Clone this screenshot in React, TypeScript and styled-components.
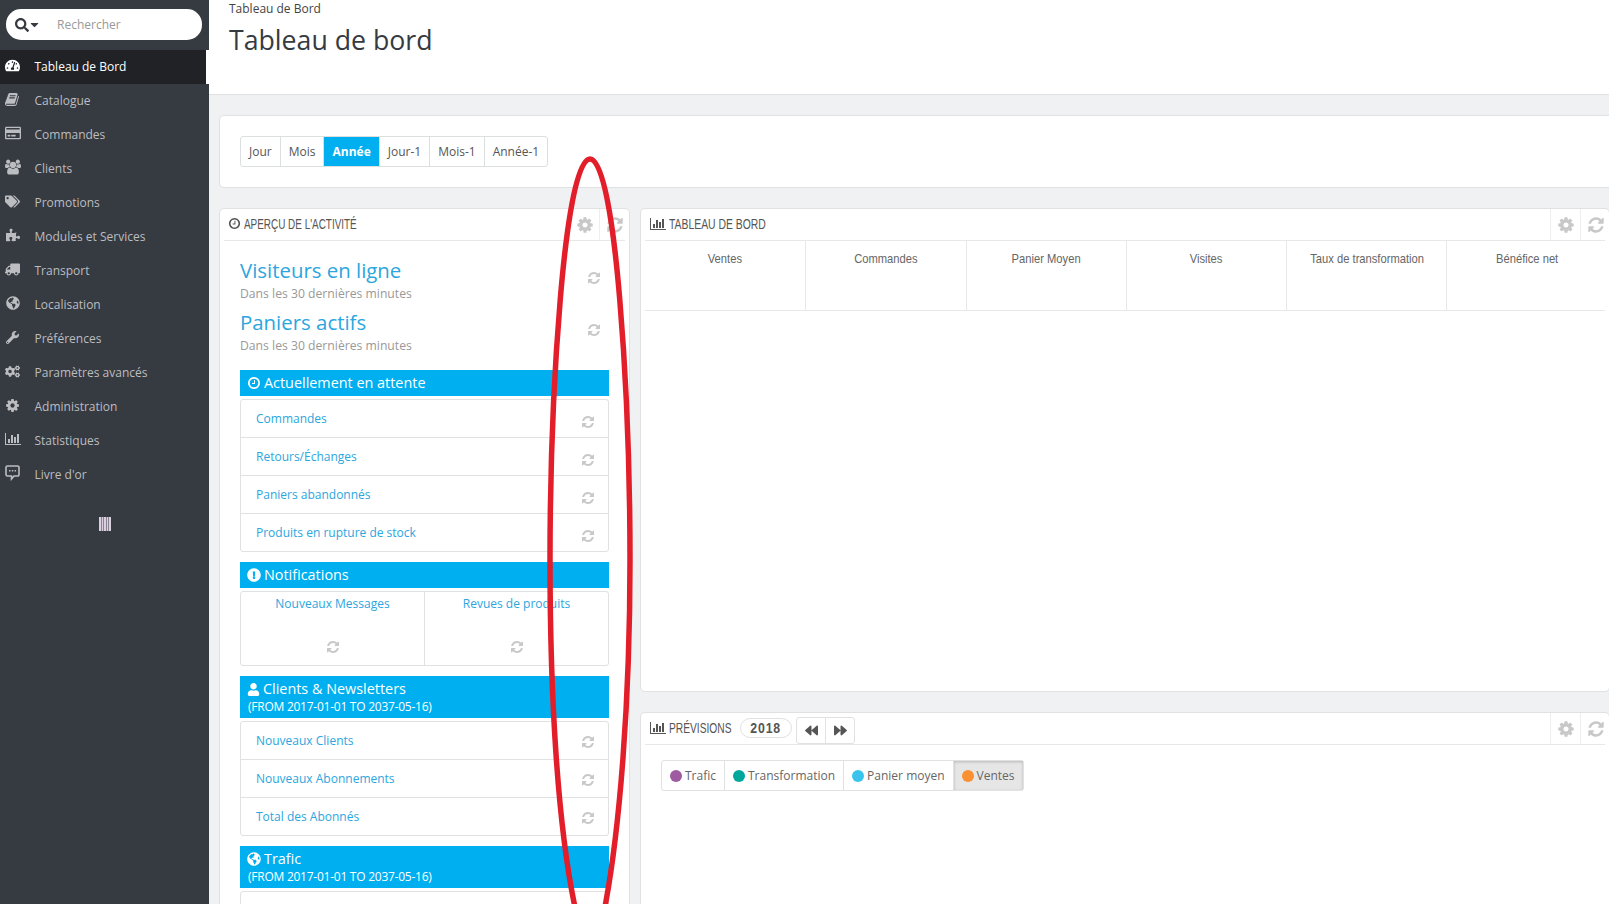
import React from 'react';
import styled, { createGlobalStyle } from 'styled-components';
import {
  FaBackward,
  FaCaretDown,
  FaExclamationCircle,
  FaForward,
  FaGlobeAmericas,
  FaPuzzlePiece,
  FaSearch,
  FaTachometerAlt,
  FaTags,
  FaTruck,
  FaUser,
  FaWrench,
  FaCogs,
  FaRegCreditCard,
} from 'react-icons/fa';

// font-awesome 4 shapes, the package only ships the redrawn v5 ones
const REFRESH =
  'M1639 1056q0 5-1 7-64 268-268 434.5t-478 166.5q-146 0-282.5-55t-243.5-157l-129 129q-19 19-45 19t-45-19-19-45v-448q0-26 19-45t45-19h448q26 0 45 19t19 45-19 45l-137 137q71 66 161 102t187 36q134 0 250-65t186-179q11-17 53-117 8-23 30-23h192q13 0 22.5 9.5t9.5 22.5zm25-800v448q0 26-19 45t-45 19h-448q-26 0-45-19t-19-45 19-45l138-138q-148-137-349-137-134 0-250 65t-186 179q-11 17-53 117-8 23-30 23h-199q-13 0-22.5-9.5t-9.5-22.5v-7q65-268 270-434.5t480-166.5q146 0 284 55.5t245 156.5l130-129q19-19 45-19t45 19 19 45z';
const COG =
  'M1152 896q0-106-75-181t-181-75-181 75-75 181 75 181 181 75 181-75 75-181zm512-109v222q0 12-8 23t-20 13l-185 28q-19 54-39 91 35 50 107 138 10 12 10 25t-9 23q-27 37-99 108t-94 71q-12 0-26-9l-138-108q-44 23-91 38-16 136-29 186-7 28-36 28h-222q-14 0-24.5-8.5t-11.5-21.5l-28-184q-49-16-90-37l-141 107q-10 9-25 9-14 0-25-11-126-114-165-168-7-10-7-23 0-12 8-23 15-21 51-66.5t54-70.5q-27-50-41-99l-183-27q-13-2-21-12.5t-8-23.5v-222q0-12 8-23t19-13l186-28q14-46 39-92-40-57-107-138-10-12-10-24 0-10 9-23 26-36 98.5-107.5t94.5-71.5q13 0 26 10l138 107q44-23 91-38 16-136 29-186 7-28 36-28h222q14 0 24.5 8.5t11.5 21.5l28 184q49 16 90 37l142-107q9-9 24-9 13 0 25 10 129 119 165 170 7 8 7 22 0 12-8 23-15 21-51 66.5t-54 70.5q26 50 41 98l183 28q13 2 21 12.5t8 23.5z';
const CHART =
  'M640 896v512h-256v-512h256zm384-512v1024h-256v-1024h256zm1024 1152v128h-2048v-1536h128v1408h1920zm-640-896v768h-256v-768h256zm384-384v1152h-256v-1152h256z';
const CLOCK =
  'M1024 544v448q0 14-9 23t-23 9h-320q-14 0-23-9t-9-23v-64q0-14 9-23t23-9h224v-352q0-14 9-23t23-9h64q14 0 23 9t9 23zm416 352q0-148-73-273t-198-198-273-73-273 73-198 198-73 273 73 273 198 198 273 73 273-73 198-198 73-273zm224 0q0 209-103 385.5t-279.5 279.5-385.5 103-385.5-103-279.5-279.5-103-385.5 103-385.5 279.5-279.5 385.5-103 385.5 103 279.5 279.5 103 385.5z';
const BOOK =
  'M1639 478q40 57 18 129l-275 906q-19 64-76.5 107.5t-122.5 43.5h-923q-77 0-148.5-53.5t-99.5-131.5q-24-67-2-127 0-4 3-27t4-37q1-8-3-21.5t-3-19.5q2-11 8-21t16.5-23.5 16.5-23.5q23-38 45-91.5t30-91.5q3-10 .5-30t-.5-28q3-11 17-28t17-23q21-36 42-92t25-90q1-9-2.5-32t.5-28q4-13 22-30.5t22-22.5q19-26 42.5-84.5t27.5-96.5q1-8-3-25.5t-2-26.5q2-8 9-18t18-23 17-21q8-12 16.5-30.5t15-35 16-36 19.5-32 26.5-23.5 36-11.5 47.5 5.5l-1 3q38-9 51-9h761q74 0 114 56t18 130l-274 906q-36 119-71.5 153.5t-128.5 34.5h-869q-27 0-38 15-11 16-1 43 24 70 144 70h923q29 0 56-15.5t35-41.5l300-987q7-22 5-57 38 15 59 43zm-1064 2q-4 13 2 22.5t20 9.5h608q13 0 25.5-9.5t16.5-22.5l21-64q4-13-2-22.5t-20-9.5h-608q-13 0-25.5 9.5t-16.5 22.5zm-83 256q-4 13 2 22.5t20 9.5h608q13 0 25.5-9.5t16.5-22.5l21-64q4-13-2-22.5t-20-9.5h-608q-13 0-25.5 9.5t-16.5 22.5z';
const USERS =
  'M593 896q-162 5-265 128h-134q-82 0-138-40.5t-56-118.5q0-353 124-353 6 0 43.5 21t97.5 42.5 119 21.5q67 0 133-23-5 37-5 66 0 139 81 256zm1071 637q0 120-73 189.5t-194 69.5h-874q-121 0-194-69.5t-73-189.5q0-53 3.5-103.5t14-109 26.5-108.5 43-97.5 62-81 85.5-53.5 111.5-20q10 0 43 21.5t73 48 107 48 135 21.5 135-21.5 107-48 73-48 43-21.5q61 0 111.5 20t85.5 53.5 62 81 43 97.5 26.5 108.5 14 109 3.5 103.5zm-1024-1277q0 106-75 181t-181 75-181-75-75-181 75-181 181-75 181 75 75 181zm704 384q0 159-112.5 271.5t-271.5 112.5-271.5-112.5-112.5-271.5 112.5-271.5 271.5-112.5 271.5 112.5 112.5 271.5zm576 225q0 78-56 118.5t-138 40.5h-134q-103-123-265-128 81-117 81-256 0-29-5-66 66 23 133 23 59 0 119-21.5t97.5-42.5 43.5-21q124 0 124 353zm-128-609q0 106-75 181t-181 75-181-75-75-181 75-181 181-75 181 75 75 181z';

function Glyph({ d, size, box = '0 0 1792 1792' }: { d: string; size: number; box?: string }) {
  return (
    <svg width={size} height={size} viewBox={box} fill="currentColor">
      <path d={d} />
    </svg>
  );
}

const ClockIcon = ({ size }: { size: number }) => <Glyph d={CLOCK} size={size} />;
const ChartIcon = ({ size }: { size: number }) => <Glyph d={CHART} size={size} box="0 0 2048 1792" />;

function CommentIcon() {
  return (
    <svg width="15" height="16" viewBox="0 0 15 16">
      <path
        d="M2.5 1h10A1.5 1.5 0 0 1 14 2.5v7a1.5 1.5 0 0 1-1.5 1.5H9l-2.5 3V11h-4A1.5 1.5 0 0 1 1 9.500v-7A1.500 1.500 0 0 1 2.500 1z"
        fill="none"
        stroke="currentColor"
        strokeWidth="1.6"
      />
      <path d="M4 5h1.500v1.500H4zM6.800 5h1.500v1.500H6.800zM9.600 5h1.500v1.500H9.600z" fill="currentColor" />
    </svg>
  );
}

const NAV: { label: string; icon: React.ReactNode; active?: boolean }[] = [
  { label: 'Tableau de Bord', icon: <FaTachometerAlt size={15} />, active: true },
  { label: 'Catalogue', icon: <Glyph d={BOOK} size={15} /> },
  { label: 'Commandes', icon: <FaRegCreditCard size={16} /> },
  { label: 'Clients', icon: <Glyph d={USERS} size={16} box="0 0 1920 1792" /> },
  { label: 'Promotions', icon: <FaTags size={15} /> },
  { label: 'Modules et Services', icon: <FaPuzzlePiece size={14} /> },
  { label: 'Transport', icon: <FaTruck size={15} /> },
  { label: 'Localisation', icon: <FaGlobeAmericas size={14} /> },
  { label: 'Préférences', icon: <FaWrench size={13} /> },
  { label: 'Paramètres avancés', icon: <FaCogs size={15} /> },
  { label: 'Administration', icon: <Glyph d={COG} size={15} /> },
  { label: 'Statistiques', icon: <ChartIcon size={16} /> },
  { label: "Livre d'or", icon: <CommentIcon /> },
];

const RANGES = ['Jour', 'Mois', 'Année', 'Jour-1', 'Mois-1', 'Année-1'];
const KPIS = ['Ventes', 'Commandes', 'Panier Moyen', 'Visites', 'Taux de transformation', 'Bénéfice net'];
const CHIPS = [
  { label: 'Trafic', color: '#9e5ba1' },
  { label: 'Transformation', color: '#00a89c' },
  { label: 'Panier moyen', color: '#3ac4ed' },
  { label: 'Ventes', color: '#f99031', active: true },
];
const RANGE_NOTE = '(FROM 2017-01-01 TO 2037-05-16)';

export default function App() {
  return (
    <Page>
      <GlobalStyle />
      <Sidebar>
        <SearchWrap>
          <SearchBox>
            <FaSearch size={14} />
            <SearchCaret>
              <FaCaretDown size={13} />
            </SearchCaret>
            <SearchText>Rechercher</SearchText>
          </SearchBox>
        </SearchWrap>
        {NAV.map(({ label, icon, active }) => (
          <NavItem key={label} $active={active}>
            <NavIcon $flip={label === 'Transport'}>{icon}</NavIcon>
            {label}
          </NavItem>
        ))}
        <Collapse>
          <svg width="12" height="14" viewBox="0 0 12 14">
            <path d="M0 0h2v14H0zM2.500 0h2v14h-2zM5 0h2v14H5zM7.500 0h2v14h-2zM10 0h2v14h-2z" fill="#d8cfe0" />
          </svg>
        </Collapse>
      </Sidebar>

      <Main>
        <Header>
          <Crumb>Tableau de Bord</Crumb>
          <Title>Tableau de bord</Title>
        </Header>

        <Content>
          <FilterCard>
            <RangeGroup>
              {RANGES.map((range) => (
                <RangeButton key={range} $active={range === 'Année'}>
                  {range}
                </RangeButton>
              ))}
            </RangeGroup>
          </FilterCard>

          <Columns>
            <Panel>
              <PanelHead>
                <PanelTitle>
                  <ClockIcon size={13} />
                  <TitleText $width={114} $scale={0.64}>
                    APERÇU DE L'ACTIVITÉ
                  </TitleText>
                </PanelTitle>
                <HeadActions />
              </PanelHead>
              <ActivityBody>
                <Metric>
                  <div>
                    <MetricTitle>Visiteurs en ligne</MetricTitle>
                    <MetricNote>Dans les 30 dernières minutes</MetricNote>
                  </div>
                  <Refresh />
                </Metric>
                <Metric>
                  <div>
                    <MetricTitle>Paniers actifs</MetricTitle>
                    <MetricNote>Dans les 30 dernières minutes</MetricNote>
                  </div>
                  <Refresh />
                </Metric>

                <SectionBar $first>
                  <SectionTitle>
                    <ClockIcon size={14} /> Actuellement en attente
                  </SectionTitle>
                </SectionBar>
                <LinkList items={['Commandes', 'Retours/Échanges', 'Paniers abandonnés', 'Produits en rupture de stock']} />

                <SectionBar>
                  <SectionTitle>
                    <FaExclamationCircle size={14} /> Notifications
                  </SectionTitle>
                </SectionBar>
                <SplitList>
                  <SplitCell>
                    <RowLink>Nouveaux Messages</RowLink>
                    <Refresh />
                  </SplitCell>
                  <SplitCell>
                    <RowLink>Revues de produits</RowLink>
                    <Refresh />
                  </SplitCell>
                </SplitList>

                <SectionBar>
                  <SectionTitle>
                    <FaUser size={13} /> Clients &amp; Newsletters
                  </SectionTitle>
                  <SectionNote>{RANGE_NOTE}</SectionNote>
                </SectionBar>
                <LinkList $raised items={['Nouveaux Clients', 'Nouveaux Abonnements', 'Total des Abonnés']} />

                <SectionBar>
                  <SectionTitle>
                    <FaGlobeAmericas size={14} /> Trafic
                  </SectionTitle>
                  <SectionNote>{RANGE_NOTE}</SectionNote>
                </SectionBar>
                <LinkList items={['']} />
              </ActivityBody>
            </Panel>

            <RightColumn>
              <KpiPanel>
                <PanelHead>
                  <PanelTitle>
                    <ChartIcon size={16} />
                    <TitleText $width={98} $scale={0.67}>
                      TABLEAU DE BORD
                    </TitleText>
                  </PanelTitle>
                  <HeadActions />
                </PanelHead>
                <KpiTable>
                  {KPIS.map((kpi) => (
                    <KpiCell key={kpi}>
                      <KpiLabel>{kpi}</KpiLabel>
                    </KpiCell>
                  ))}
                </KpiTable>
              </KpiPanel>

              <Panel>
                <PanelHead>
                  <PanelTitle>
                    <ChartIcon size={16} />
                    <TitleText $width={62} $scale={0.66}>
                      PRÉVISIONS
                    </TitleText>
                  </PanelTitle>
                  <YearPill>
                    <YearText>2018</YearText>
                  </YearPill>
                  <StepGroup>
                    <StepButton>
                      <FaBackward size={13} />
                    </StepButton>
                    <StepButton>
                      <FaForward size={13} />
                    </StepButton>
                  </StepGroup>
                  <HeadActions />
                </PanelHead>
                <ChipRow>
                  {CHIPS.map((chip) => (
                    <Chip key={chip.label} $active={chip.active}>
                      <Dot $color={chip.color} />
                      {chip.label}
                    </Chip>
                  ))}
                </ChipRow>
              </Panel>
            </RightColumn>
          </Columns>
        </Content>
      </Main>

      {/* hand-drawn annotation on top of the screenshot */}
      <Annotation width="1609" height="904" viewBox="0 0 1609 904">
        <path
          d="M576 912 C558 830 550 700 550 560 C550 400 564 159 590 159 C616 159 630 400 630 560 C630 700 620 830 604 912"
          fill="none"
          stroke="#e31e2b"
          strokeWidth="5.500"
        />
      </Annotation>
    </Page>
  );
}

function Refresh() {
  return (
    <RefreshIcon>
      <Glyph d={REFRESH} size={14} />
    </RefreshIcon>
  );
}

function HeadActions() {
  return (
    <Actions>
      <ActionButton>
        <Glyph d={COG} size={18} />
      </ActionButton>
      <ActionButton>
        <Glyph d={REFRESH} size={18} />
      </ActionButton>
    </Actions>
  );
}

function LinkList({ items, $raised }: { items: string[]; $raised?: boolean }) {
  return (
    <List>
      {items.map((item) => (
        <ListRow key={item} $raised={$raised}>
          <RowLink>{item}</RowLink>
          <Refresh />
        </ListRow>
      ))}
    </List>
  );
}

const GlobalStyle = createGlobalStyle`
  html, body {
    margin: 0;
    padding: 0;
    overflow: hidden;
  }

  body {
    font-family: "Open Sans", "Liberation Sans", sans-serif;
    font-size: 12px;
    color: #555;
  }
`;

const Page = styled.div`
  position: relative;
  display: flex;
  width: 1609px;
  height: 904px;
  overflow: hidden;
  background: #eff1f2;
`;

const Sidebar = styled.aside`
  flex: 0 0 209px;
  background: #363a41;
`;

const SearchWrap = styled.div`
  height: 50px;
  padding: 9px 7px 0 6px;
  box-sizing: border-box;
`;

const SearchBox = styled.div`
  display: flex;
  align-items: center;
  height: 31px;
  padding-left: 9px;
  border-radius: 15px;
  background: #fff;
  color: #363a41;
`;

const SearchCaret = styled.span`
  display: flex;
  margin-left: -1px;
`;

const SearchText = styled.span`
  margin-left: 16px;
  color: #999;
`;

const NavItem = styled.div<{ $active?: boolean }>`
  display: flex;
  align-items: center;
  box-sizing: border-box;
  width: ${(p) => (p.$active ? '209px' : 'auto')};
  height: 34px;
  padding-bottom: 2px;
  color: ${(p) => (p.$active ? '#fff' : '#bcbdc0')};
  background: ${(p) => (p.$active ? '#202226' : 'transparent')};
  border-right: ${(p) => (p.$active ? '3px solid #fff' : '0')};
`;

const NavIcon = styled.span<{ $flip?: boolean }>`
  display: flex;
  justify-content: center;
  width: 25px;
  margin: -2px 9.5px 0 0;
  transform: ${(p) => (p.$flip ? 'scaleX(-1)' : 'none')};
`;

const Collapse = styled.div`
  display: flex;
  justify-content: center;
  margin-top: 25px;
`;

const Main = styled.main`
  flex: 1;
  min-width: 0;
`;

const Header = styled.header`
  height: 94px;
  padding: 0 10px 0 20px;
  background: #fff;
  border-bottom: 1px solid #dfe1e2;
`;

const Crumb = styled.div`
  padding-top: 1px;
  line-height: 15px;
  color: #444;
`;

const Title = styled.h1`
  margin: 7px 0 0;
  font-size: 26.700px;
  font-weight: 400;
  line-height: 34px;
  color: #363a41;
`;

const Content = styled.div`
  padding: 20px 0 0 10px;
`;

const Card = styled.section`
  background: #fff;
  border: 1px solid #dfe1e2;
  border-radius: 5px;
  box-sizing: border-box;
`;

const FilterCard = styled(Card)`
  width: 1400px;
  height: 73px;
  padding: 20px;
  margin-bottom: 20px;
`;

const RangeGroup = styled.div`
  display: inline-flex;
  height: 31px;
  border: 1px solid #dcdfe0;
  border-radius: 3px;
  box-sizing: border-box;
`;

const RangeButton = styled.div<{ $active?: boolean }>`
  display: flex;
  align-items: center;
  padding: 0 8px;
  border-left: 1px solid #dcdfe0;
  font-weight: ${(p) => (p.$active ? 700 : 400)};
  color: ${(p) => (p.$active ? '#fff' : '#555')};
  background: ${(p) => (p.$active ? '#00aff0' : 'transparent')};

  &:first-child {
    border-left: 0;
  }
`;

const Columns = styled.div`
  display: grid;
  grid-template-columns: 411px 970px;
  column-gap: 10px;
  align-items: start;
`;

const Panel = styled(Card)`
  padding: 0 4px;
`;

const KpiPanel = styled(Panel)`
  height: 484px;
`;

const PanelHead = styled.div`
  display: flex;
  align-items: center;
  height: 31px;
  border-bottom: 1px solid #e6e8e9;
`;

const PanelTitle = styled.div`
  display: flex;
  align-items: center;
  padding: 0 0 2px 4px;
  color: #555;

  svg {
    flex: none;
    margin-right: 3px;
  }
`;

// no condensed family is installed, so the heading face is squeezed
const TitleText = styled.span<{ $width: number; $scale: number }>`
  display: inline-block;
  width: ${(p) => p.$width}px;
  font-family: "Liberation Sans", sans-serif;
  font-size: 15.500px;
  white-space: nowrap;
  transform: scaleX(${(p) => p.$scale});
  transform-origin: left center;
`;

const Actions = styled.div`
  display: flex;
  align-self: stretch;
  margin: 0 -4px 0 auto;
`;

const ActionButton = styled.div`
  display: flex;
  align-items: center;
  justify-content: center;
  width: 29px;
  color: #c8c8c8;
  border-left: 1px solid #eee;
`;

const RightColumn = styled.div`
  display: flex;
  flex-direction: column;
  row-gap: 20px;

  ${Actions} {
    margin-right: -5px;
  }

  ${PanelTitle} {
    padding-left: 5px;
  }
`;

const ActivityBody = styled.div`
  padding: 16px 16px 0;
`;

const Metric = styled.div`
  display: flex;
  justify-content: space-between;
  height: 46px;
  margin-bottom: 6px;
  padding-right: 8px;
`;

const MetricTitle = styled.div`
  margin-bottom: 2px;
  font-size: 20.400px;
  line-height: 26px;
  color: #2ba6de;
`;

const MetricNote = styled.div`
  font-size: 12.200px;
  line-height: 18px;
  color: #999;
`;

const RefreshIcon = styled.span`
  display: flex;
  color: #c8c8c8;
  align-self: center;
  margin-top: 6px;

  ${Metric} & {
    margin-top: -4px;
  }
`;

const SectionBar = styled.div<{ $first?: boolean }>`
  margin: ${(p) => (p.$first ? '15px' : '10px')} 0 3px;
  padding: 0 0 0 7px;
  min-height: 26px;
  background: #00aff0;
  color: #fff;
`;

const SectionTitle = styled.div`
  display: flex;
  align-items: center;
  column-gap: 3px;
  font-size: 14.400px;
  line-height: 26px;
`;

const SectionNote = styled.div`
  margin-top: -4px;
  padding: 0 0 2px 1px;
  font-size: 12px;
  line-height: 18px;
  letter-spacing: -0.25px;
`;

const List = styled.div`
  background: #fff;
  border: 1px solid #dfe1e2;
  border-radius: 3px;
`;

const ListRow = styled.div<{ $raised?: boolean }>`
  display: flex;
  align-items: center;
  justify-content: space-between;
  box-sizing: border-box;
  height: 38px;
  padding: 0 13px 0 15px;
  border-top: 1px solid #dfe1e2;

  &:first-child {
    height: 37px;
    border-top: 0;
  }

  ${RefreshIcon} {
    margin-top: ${(p) => (p.$raised ? '2px' : '6px')};
  }
`;

const RowLink = styled.span`
  margin-top: -1px;
  color: #2ba6de;
`;

const SplitList = styled(List)`
  display: grid;
  grid-template-columns: 183px 1fr;
  height: 75px;
  box-sizing: border-box;
`;

const SplitCell = styled.div`
  display: flex;
  flex-direction: column;
  align-items: center;
  justify-content: space-between;
  padding: 3px 0 11px;
  border-left: 1px solid #dfe1e2;

  &:first-child {
    border-left: 0;
  }

  ${RowLink} {
    margin-top: 0;
  }

  ${RefreshIcon} {
    margin-top: 0;
  }
`;

const KpiTable = styled.div`
  display: grid;
  grid-template-columns: repeat(6, 160.250px);
  height: 69px;
  border-bottom: 1px solid #e6e8e9;
`;

const KpiCell = styled.div`
  padding-top: 9px;
  text-align: center;
  border-left: 1px solid #e6e8e9;

  &:first-child {
    border-left: 0;
  }
`;

const KpiLabel = styled.span`
  display: inline-block;
  font-family: "Liberation Sans", sans-serif;
  font-size: 13px;
  color: #666;
  white-space: nowrap;
  transform: scaleX(0.86);
`;

const YearPill = styled.div`
  display: flex;
  align-items: center;
  justify-content: center;
  width: 52px;
  height: 20px;
  margin: 0 0 2px 9px;
  border: 1px solid #dfe1e2;
  border-radius: 10px;
  box-sizing: border-box;
`;

const YearText = styled.span`
  font-family: "Liberation Sans", sans-serif;
  font-size: 15px;
  font-weight: 700;
  letter-spacing: 1px;
  color: #555;
  transform: scaleX(0.82);
`;

const StepGroup = styled.div`
  display: flex;
  align-self: flex-start;
  height: 25px;
  margin: 4px 0 0 4px;
  border: 1px solid #dfe1e2;
  border-radius: 3px;
  background: #fff;
`;

const StepButton = styled.div`
  display: flex;
  align-items: center;
  justify-content: center;
  width: 28px;
  color: #555;
  border-left: 1px solid #dfe1e2;

  &:first-child {
    border-left: 0;
  }
`;

const ChipRow = styled.div`
  display: inline-flex;
  margin: 15px 0 150px 16px;
  border: 1px solid #dfe1e2;
  border-radius: 3px;
`;

const Chip = styled.div<{ $active?: boolean }>`
  display: flex;
  align-items: center;
  column-gap: 3px;
  height: 29px;
  padding: 0 8px;
  border-left: 1px solid #dfe1e2;
  color: #666;
  background: ${(p) => (p.$active ? '#e6e6e6' : 'transparent')};
  box-shadow: ${(p) => (p.$active ? 'inset 0 1px 3px rgba(0,0,0,.2)' : 'none')};

  &:first-child {
    border-left: 0;
  }
`;

const Dot = styled.span<{ $color: string }>`
  width: 12px;
  height: 12px;
  border-radius: 50%;
  background: ${(p) => p.$color};
`;

const Annotation = styled.svg`
  position: absolute;
  left: 0;
  top: 0;
  pointer-events: none;
`;
